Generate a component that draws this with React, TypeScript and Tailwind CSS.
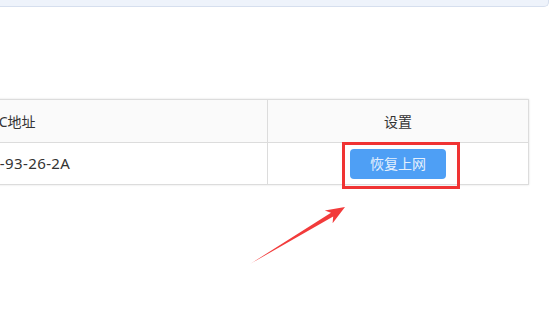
import React from 'react'

const font = { fontFamily: '"Noto Sans", "Noto Sans CJK SC", sans-serif' }

function Arrow() {
    return (
        <svg className="absolute left-0 top-0" width="552" height="311" viewBox="0 0 552 311">
            <polygon
                points="250,264 331,212.8 324.8,210.4 345,207 332.6,223.2 333.2,216.6"
                fill="#f23b3b"
            />
        </svg>
    )
}

export default function App() {
    return (
        <div className="relative w-[552px] h-[311px] overflow-hidden bg-white text-[#333]" style={font}>
            <div className="h-[7px] w-[549px] bg-[#eef3fb] border-b border-r border-[#d6dfee] rounded-br-[5px]" />

            <div className="mt-[92px] ml-[-255px] w-[784px] border border-[#dcdcdc] shadow-[0_0_2px_rgba(0,0,0,0.12)]">
                <div className="grid grid-cols-[522px_1fr] h-[43px] bg-[#fafafa] border-b border-[#dcdcdc] text-[14px]">
                    <div className="flex items-center justify-center border-r border-[#dcdcdc]">MAC地址</div>
                    <div className="flex items-center justify-center">设置</div>
                </div>
                <div className="grid grid-cols-[522px_1fr] h-[41px]">
                    <div className="flex items-center justify-center border-r border-[#dcdcdc] text-[15px] tracking-[0.4px] pr-[7px]">44-37-E6-93-26-2A</div>
                    <div className="flex items-center justify-center">
                        <button className="w-[96px] h-[30px] rounded-[4px] bg-[#4e9ff5] text-[#e4f0fd] text-[14px]">
                            恢复上网
                        </button>
                    </div>
                </div>
            </div>

            <div className="absolute left-[342px] top-[142px] w-[118px] h-[47px] border-[3px] border-[#f03333]" />
            <Arrow />
        </div>
    )
}
